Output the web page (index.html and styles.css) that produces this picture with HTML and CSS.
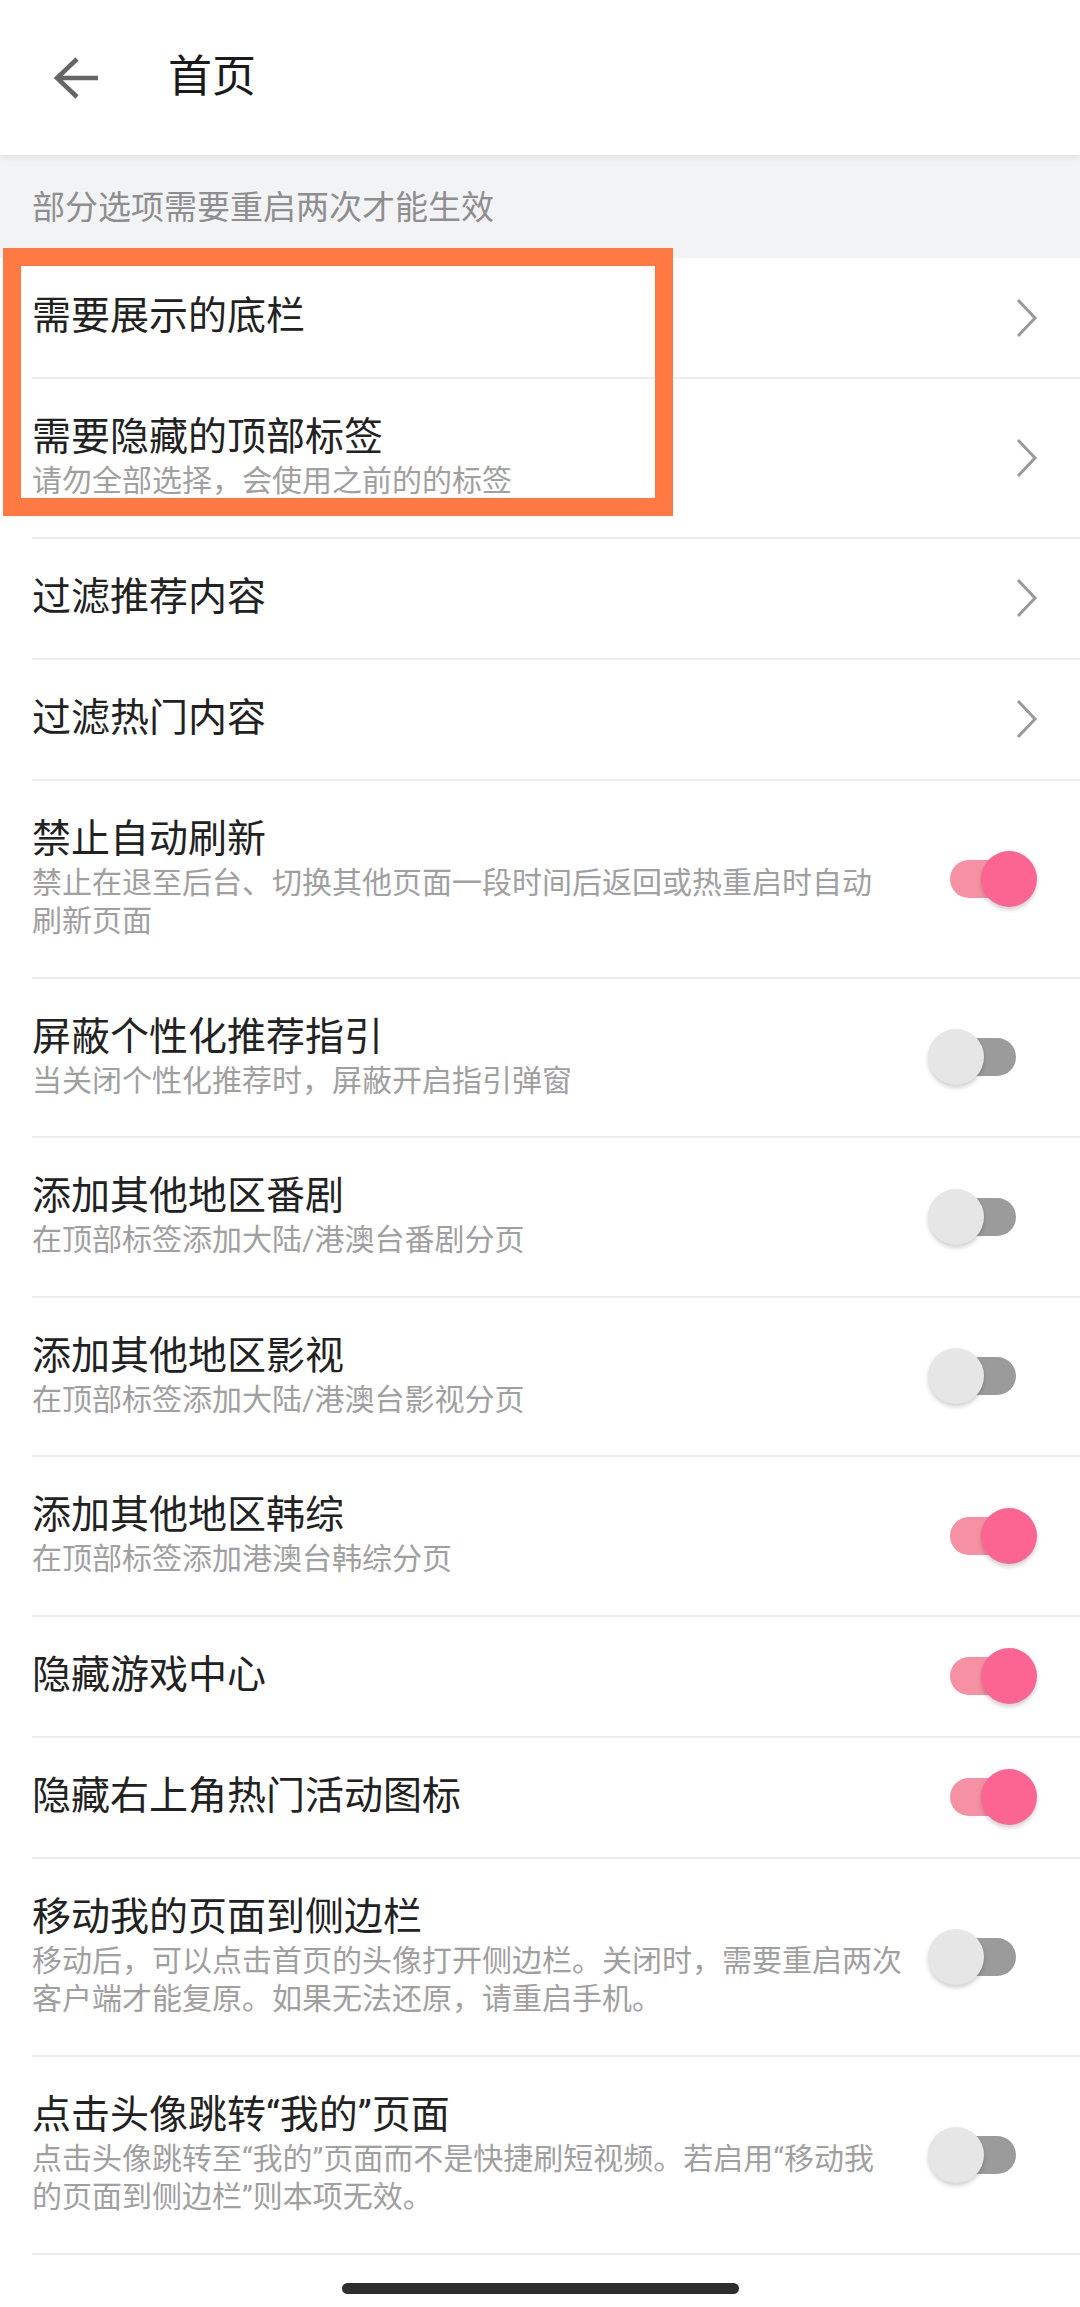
FILE: index.html
```html
<!DOCTYPE html>
<html lang="zh-CN">
<head>
<meta charset="utf-8">
<title>首页</title>
<link rel="stylesheet" href="styles.css">
</head>
<body>
<div class="page">
  <header class="appbar">
    <svg class="back" width="48" height="44" viewBox="0 0 48 44">
      <path d="M25 3 L5 22 L25 41 M5 22 L46 22" fill="none" stroke="#666" stroke-width="4.5"/>
    </svg>
    <h1 class="appbar-title">首页</h1>
  </header>

  <div class="note">部分选项需要重启两次才能生效</div>

  <div class="list">
    <div class="row">
      <div class="inner">
        <div class="text"><div class="title">需要展示的底栏</div></div>
        <svg class="chev" width="24" height="40" viewBox="0 0 24 40"><path d="M3 2 L20 20 L3 38" fill="none" stroke="#9a9a9a" stroke-width="3"/></svg>
      </div>
    </div>
    <div class="row">
      <div class="inner">
        <div class="text"><div class="title">需要隐藏的顶部标签</div><div class="sub">请勿全部选择，会使用之前的的标签</div></div>
        <svg class="chev" width="24" height="40" viewBox="0 0 24 40"><path d="M3 2 L20 20 L3 38" fill="none" stroke="#9a9a9a" stroke-width="3"/></svg>
      </div>
    </div>
    <div class="row">
      <div class="inner">
        <div class="text"><div class="title">过滤推荐内容</div></div>
        <svg class="chev" width="24" height="40" viewBox="0 0 24 40"><path d="M3 2 L20 20 L3 38" fill="none" stroke="#9a9a9a" stroke-width="3"/></svg>
      </div>
    </div>
    <div class="row">
      <div class="inner">
        <div class="text"><div class="title">过滤热门内容</div></div>
        <svg class="chev" width="24" height="40" viewBox="0 0 24 40"><path d="M3 2 L20 20 L3 38" fill="none" stroke="#9a9a9a" stroke-width="3"/></svg>
      </div>
    </div>
    <div class="row">
      <div class="inner">
        <div class="text"><div class="title">禁止自动刷新</div><div class="sub">禁止在退至后台、切换其他页面一段时间后返回或热重启时自动<br>刷新页面</div></div>
        <div class="switch on"><span class="track"></span><span class="thumb"></span></div>
      </div>
    </div>
    <div class="row">
      <div class="inner">
        <div class="text"><div class="title">屏蔽个性化推荐指引</div><div class="sub">当关闭个性化推荐时，屏蔽开启指引弹窗</div></div>
        <div class="switch"><span class="track"></span><span class="thumb"></span></div>
      </div>
    </div>
    <div class="row">
      <div class="inner">
        <div class="text"><div class="title">添加其他地区番剧</div><div class="sub">在顶部标签添加大陆/港澳台番剧分页</div></div>
        <div class="switch"><span class="track"></span><span class="thumb"></span></div>
      </div>
    </div>
    <div class="row">
      <div class="inner">
        <div class="text"><div class="title">添加其他地区影视</div><div class="sub">在顶部标签添加大陆/港澳台影视分页</div></div>
        <div class="switch"><span class="track"></span><span class="thumb"></span></div>
      </div>
    </div>
    <div class="row">
      <div class="inner">
        <div class="text"><div class="title">添加其他地区韩综</div><div class="sub">在顶部标签添加港澳台韩综分页</div></div>
        <div class="switch on"><span class="track"></span><span class="thumb"></span></div>
      </div>
    </div>
    <div class="row">
      <div class="inner">
        <div class="text"><div class="title">隐藏游戏中心</div></div>
        <div class="switch on"><span class="track"></span><span class="thumb"></span></div>
      </div>
    </div>
    <div class="row">
      <div class="inner">
        <div class="text"><div class="title">隐藏右上角热门活动图标</div></div>
        <div class="switch on"><span class="track"></span><span class="thumb"></span></div>
      </div>
    </div>
    <div class="row">
      <div class="inner">
        <div class="text"><div class="title">移动我的页面到侧边栏</div><div class="sub">移动后，可以点击首页的头像打开侧边栏。关闭时，需要重启两次<br>客户端才能复原。如果无法还原，请重启手机。</div></div>
        <div class="switch"><span class="track"></span><span class="thumb"></span></div>
      </div>
    </div>
    <div class="row">
      <div class="inner">
        <div class="text"><div class="title">点击头像跳转“我的”页面</div><div class="sub">点击头像跳转至“我的”页面而不是快捷刷短视频。若启用“移动我<br>的页面到侧边栏”则本项无效。</div></div>
        <div class="switch"><span class="track"></span><span class="thumb"></span></div>
      </div>
    </div>
  </div>

  <div class="home-bar"></div>

  <div class="highlight"></div>
</div>
</body>
</html>
```

FILE: styles.css
```css
* { box-sizing: border-box; }
html, body {
  margin: 0;
  padding: 0;
  background: #ffffff;
}
body {
  font-family: "Roboto", "Noto Sans CJK SC", sans-serif;
  color: #222;
}
.page {
  position: relative;
  width: 1080px;
  min-height: 2307px;
  background: #fff;
}
.appbar {
  position: relative;
  z-index: 2;
  height: 155px;
  display: flex;
  align-items: center;
  background: #fff;
  box-shadow: 0 2px 6px rgba(0, 0, 0, 0.08);
}
.back {
  margin-left: 52px;
  flex: none;
}
.appbar-title {
  margin: 0 0 0 68px;
  font-size: 44px;
  font-weight: 400;
  color: #1a1a1a;
  line-height: 1;
  position: relative;
  top: -1px;
}
.note {
  height: 103px;
  background: #f2f3f5;
  padding-left: 32px;
  padding-bottom: 4px;
  display: flex;
  align-items: center;
  font-size: 33px;
  color: #8e8e8e;
}
.list {
  background: #fff;
}
.row {
  padding-left: 32px;
}
.inner {
  display: flex;
  align-items: center;
  border-bottom: 2px solid #ececec;
  padding-right: 43px;
}
.text {
  flex: 1;
  padding: 33px 0 36px;
  min-width: 0;
}
.title {
  font-size: 39px;
  line-height: 50px;
  color: #222;
  white-space: nowrap;
}
.sub {
  font-size: 30px;
  line-height: 38.5px;
  color: #a0a0a0;
  white-space: nowrap;
}
.chev {
  flex: none;
  margin-right: -2px;
}
.switch {
  position: relative;
  flex: none;
  width: 109px;
  height: 56px;
}
.switch .track {
  position: absolute;
  left: 22px;
  top: 9px;
  width: 66px;
  height: 38px;
  border-radius: 19px;
  background: #9b9b9b;
}
.switch .thumb {
  position: absolute;
  left: 0;
  top: 0;
  width: 56px;
  height: 56px;
  border-radius: 50%;
  background: #e6e6e6;
  box-shadow: 0 3px 4px rgba(0, 0, 0, 0.18);
}
.switch.on .track {
  background: #f591a3;
}
.switch.on .thumb {
  left: 53px;
  background: #fc6591;
}
.home-bar {
  width: 397px;
  height: 11px;
  border-radius: 6px;
  background: #2e2e2e;
  margin: 28px auto 0;
}
.highlight {
  position: absolute;
  left: 3px;
  top: 248px;
  width: 670px;
  height: 268px;
  border: 18px solid #ff7a42;
  z-index: 3;
  pointer-events: none;
}
```
